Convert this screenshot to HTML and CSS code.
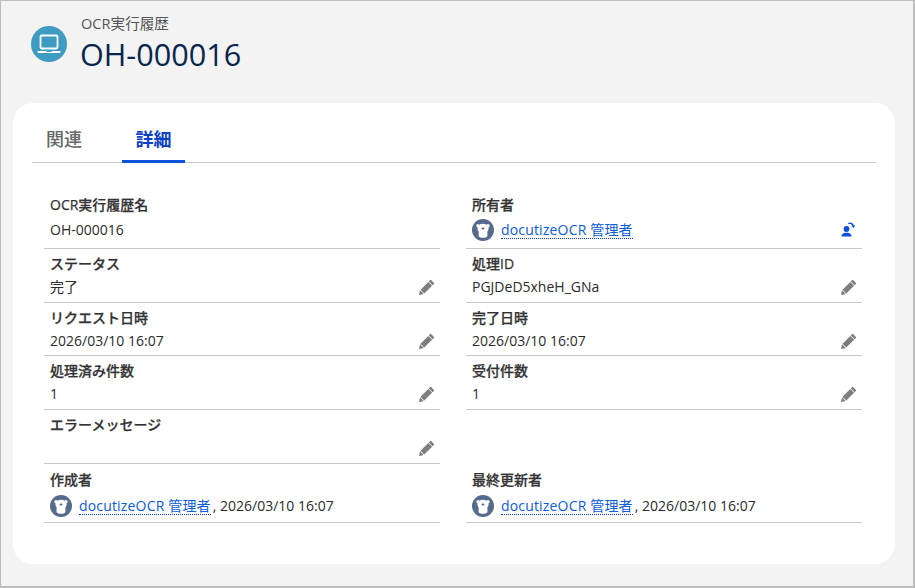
FILE: index.html
```html
<!DOCTYPE html>
<html lang="ja">
<head>
<meta charset="utf-8">
<title>OH-000016</title>
<link rel="stylesheet" href="styles.css">
</head>
<body>
<svg class="defs" width="0" height="0" aria-hidden="true">
  <symbol id="pencil" viewBox="0 0 16 16">
    <path d="M12.100 1.100 14.900 3.900a.7.7 0 0 1 0 1l-1.300 1.300-3.800-3.800 1.300-1.300a.7.7 0 0 1 1 0ZM9.300 2.900l3.800 3.800-7.800 7.800-3.800-3.800ZM1.100 11.300l3.600 3.600-4 1a.5.5 0 0 1-.6-.6Z"/>
  </symbol>
  <symbol id="bear" viewBox="0 0 22 22">
    <circle cx="11" cy="11" r="11" fill="#566a8c"/>
    <circle cx="6" cy="6.800" r="1.700" fill="#fff"/>
    <circle cx="16" cy="6.800" r="1.700" fill="#fff"/>
    <ellipse cx="11" cy="9.500" rx="5.600" ry="4.800" fill="#fff"/>
    <path d="M7 11h8c.3 2 .6 4 .4 6.200-.9 1-2.700 1.500-4.400 1.500s-3.500-.5-4.400-1.500C6.400 15 6.700 13 7 11Z" fill="#fff"/>
    <ellipse cx="11" cy="9.400" rx="1.500" ry="1" fill="#566a8c"/>
  </symbol>
</svg>
<div class="page">
  <header class="head">
    <span class="app-icon">
      <svg viewBox="0 0 36 36" width="36" height="36"><circle cx="18" cy="18" r="18" fill="#3f9bc1"/><rect x="9.500" y="9.500" width="17" height="13" rx="1.200" fill="none" stroke="#fff" stroke-width="1.800"/><path d="M6.500 25h8.500l.8.900h4.400l.8-.9h8.500v.8a1.200 1.200 0 0 1-1.200 1.200H7.700a1.200 1.200 0 0 1-1.200-1.200Z" fill="#fff"/></svg>
    </span>
    <div class="head-text">
      <div class="kind">OCR実行履歴</div>
      <h1 class="title">OH-000016</h1>
    </div>
  </header>
  <main class="card">
    <nav class="tabs">
      <a class="tab">関連</a>
      <a class="tab active">詳細</a>
    </nav>
    <section class="grid">
      <div class="field first"><div class="label">OCR実行履歴名</div><div class="value">OH-000016</div></div>
      <div class="field first"><div class="label">所有者</div><div class="value"><svg class="bear"><use href="#bear"/></svg><a class="link">docutizeOCR 管理者</a>
        <svg class="change" viewBox="0 0 14 16" width="14" height="16"><circle cx="5.500" cy="8" r="2.900"/><path d="M.5 15.500c0-2.600 2-3.300 3.300-3.700h3.400c1.300.4 3.300 1.100 3.300 3.700Z"/><path d="M7 2.200C9.300.8 12 1.800 12.700 4.300l1.300-.4-1.100 3.200-2.700-2 1.100-.4C10.800 3.100 9 2.400 7.500 3.300Z"/></svg>
      </div></div>
      <div class="field"><div class="label">ステータス</div><div class="value">完了<svg class="pencil"><use href="#pencil"/></svg></div></div>
      <div class="field"><div class="label">処理ID</div><div class="value">PGJDeD5xheH_GNa<svg class="pencil"><use href="#pencil"/></svg></div></div>
      <div class="field"><div class="label">リクエスト日時</div><div class="value">2026/03/10 16:07<svg class="pencil"><use href="#pencil"/></svg></div></div>
      <div class="field"><div class="label">完了日時</div><div class="value">2026/03/10 16:07<svg class="pencil"><use href="#pencil"/></svg></div></div>
      <div class="field"><div class="label">処理済み件数</div><div class="value">1<svg class="pencil"><use href="#pencil"/></svg></div></div>
      <div class="field"><div class="label">受付件数</div><div class="value">1<svg class="pencil"><use href="#pencil"/></svg></div></div>
      <div class="field"><div class="label">エラーメッセージ</div><div class="value"><svg class="pencil"><use href="#pencil"/></svg></div></div>
      <div class="spacer"></div>
      <div class="field last"><div class="label">作成者</div><div class="value"><svg class="bear"><use href="#bear"/></svg><a class="link">docutizeOCR 管理者</a><span class="after">, 2026/03/10 16:07</span></div></div>
      <div class="field last"><div class="label">最終更新者</div><div class="value"><svg class="bear"><use href="#bear"/></svg><a class="link">docutizeOCR 管理者</a><span class="after">, 2026/03/10 16:07</span></div></div>
    </section>
  </main>
</div>
</body>
</html>
```
FILE: styles.css
```css
* { box-sizing: border-box; }
html, body { margin: 0; height: 100%; }
body {
  font-family: "Open Sans", "Noto Sans CJK JP", sans-serif;
  font-size: 14px;
  color: #2b2b2b;
  background: #fff;
}
.defs { position: absolute; }
.page {
  width: 915px;
  height: 588px;
  padding: 1px 18px 22px 12px;
  background: #f3f3f3;
  border: 1px solid #bdbdbd;
  border-right-width: 2px;
  border-bottom-width: 2px;
  overflow: hidden;
}
.head {
  display: flex;
  align-items: center;
  gap: 13px;
  height: 101px;
  padding: 0 0 19px 18px;
}
.app-icon { display: block; width: 36px; height: 36px; margin-top: 2px; }
.head-text { display: flex; flex-direction: column; gap: 4px; }
.kind { font-size: 14.600px; line-height: 17px; color: #555; margin-left: 1px; }
.title { margin: 0; font-size: 30.600px; line-height: 36px; font-weight: 400; color: #08264d; }
.card {
  height: 461px;
  background: #fff;
  border-radius: 20px;
  padding: 13px 19px 0;
}
.tabs {
  display: flex;
  gap: 36px;
  height: 47px;
  border-bottom: 1px solid #c8c8c8;
  padding-left: 14px;
}
.tab {
  font-size: 18px;
  font-weight: 500;
  line-height: 22px;
  padding-top: 12px;
  height: 47px;
  color: #666;
}
.tab.active {
  width: 63px;
  margin-left: 4px;
  text-align: center;
  font-weight: 700;
  color: #0b3fc4;
  border-bottom: 3px solid #0b50d8;
}
.grid {
  display: grid;
  grid-template-columns: 396px 396px;
  grid-template-rows: 59px 54px 53px 54px 54px 59px;
  column-gap: 26px;
  padding: 27px 12px 0;
}
.field {
  padding: 5px 6px 0;
  border-bottom: 1px solid #c8c8c8;
}
.label {
  font-size: 14px;
  font-weight: 500;
  line-height: 20px;
  color: #333;
  -webkit-text-stroke: .25px #333;
}
.value {
  display: flex;
  align-items: center;
  height: 25px;
  font-size: 14px;
  line-height: 20px;
  color: #2b2b2b;
}
.first .value { margin-top: 2px; }
.last { padding-top: 6px; }
.last .value { margin-top: 3px; }
.bear { width: 22px; height: 22px; margin-right: 7px; flex: none; }
.link {
  color: #0b5cd8;
  border-bottom: 1px dotted #0b3fc4;
  line-height: 17px;
  letter-spacing: .17px;
}
.after { margin-left: 2px; }
.pencil { width: 16px; height: 16px; margin-left: auto; margin-right: -1px; fill: #7e7e7e; flex: none; }
.change { margin-left: auto; margin-right: 1px; margin-top: -2px; fill: #0b50d8; flex: none; }
```
